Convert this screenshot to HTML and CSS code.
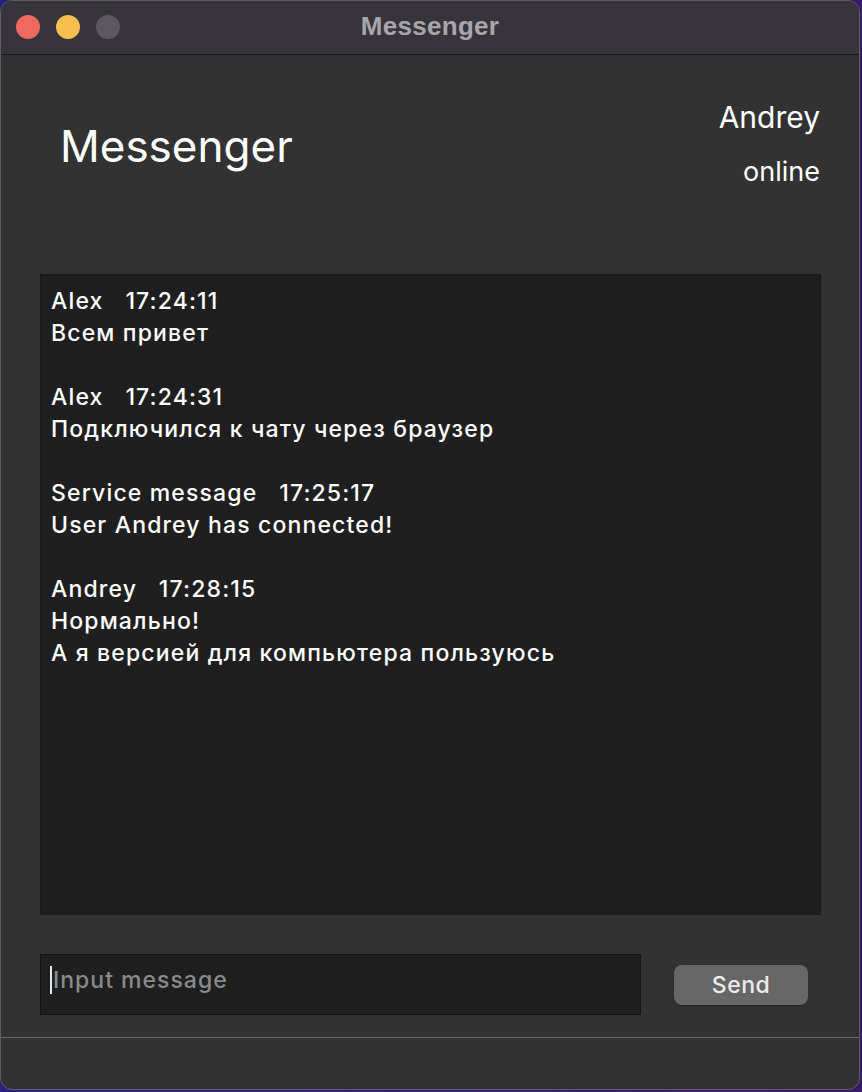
FILE: index.html
```html
<!DOCTYPE html>
<html>
<head>
<meta charset="utf-8">
<link rel="stylesheet" href="styles.css">
</head>
<body>
<div class="window">
  <div class="titlebar">
    <div class="lights">
      <span class="light red"></span>
      <span class="light yellow"></span>
      <span class="light gray"></span>
    </div>
    <div class="title">Messenger</div>
  </div>
  <div class="content">
    <div class="header">
      <div class="app-name">Messenger</div>
      <div class="user">
        <div class="user-name">Andrey</div>
        <div class="user-status">online</div>
      </div>
    </div>
    <div class="chat">
      <div class="line">Alex&nbsp;&nbsp;&nbsp;17:24:11</div>
      <div class="line">Всем привет</div>
      <div class="line">&nbsp;</div>
      <div class="line">Alex&nbsp;&nbsp;&nbsp;17:24:31</div>
      <div class="line">Подключился к чату через браузер</div>
      <div class="line">&nbsp;</div>
      <div class="line">Service message&nbsp;&nbsp;&nbsp;17:25:17</div>
      <div class="line">User Andrey has connected!</div>
      <div class="line">&nbsp;</div>
      <div class="line">Andrey&nbsp;&nbsp;&nbsp;17:28:15</div>
      <div class="line">Нормально!</div>
      <div class="line">А я версией для компьютера пользуюсь</div>
    </div>
    <div class="composer">
      <div class="input"><span class="caret"></span><span class="placeholder">Input message</span></div>
      <div class="send">Send</div>
    </div>
  </div>
  <div class="footer"></div>
</div>
</body>
</html>
```
FILE: styles.css
```css
* { box-sizing: border-box; }
html, body { margin: 0; padding: 0; }
body {
  width: 862px;
  height: 1092px;
  background: linear-gradient(90deg, #2a1f86 0%, #3a1b6a 100%);
  font-family: Inter, "Liberation Sans", Arial, sans-serif;
  overflow: hidden;
}
.window {
  width: 860px;
  height: 1090px;
  border-radius: 12px;
  border: 1px solid #5e5e62;
  background: #323232;
  overflow: hidden;
  display: flex;
  flex-direction: column;
}
.titlebar {
  height: 54px;
  flex: none;
  background: #37353b;
  border-bottom: 1px solid #19181b;
  display: flex;
  align-items: center;
  position: relative;
}
.lights {
  display: flex;
  gap: 16px;
  padding-left: 15px;
  margin-top: -1px;
}
.light {
  width: 24px;
  height: 24px;
  border-radius: 50%;
  display: block;
}
.red { background: #ee695e; }
.yellow { background: #f5be4f; }
.gray { background: #5b595f; }
.title {
  position: absolute;
  left: 0;
  right: 0;
  top: 10px;
  text-align: center;
  color: #a8a6ac;
  font-family: "Liberation Sans", Arial, sans-serif;
  font-weight: bold;
  font-size: 26px;
  letter-spacing: 0.3px;
}
.content {
  flex: 1;
  display: flex;
  flex-direction: column;
  padding: 0 38px 0 39px;
}
.header {
  height: 219px;
  display: flex;
  justify-content: space-between;
  align-items: flex-start;
}
.app-name {
  color: #ffffff;
  font-size: 44px;
  margin-top: 64px;
  margin-left: 20px;
}
.user {
  display: flex;
  flex-direction: column;
  align-items: flex-end;
  margin-top: 42px;
  margin-right: 1px;
  color: #ffffff;
}
.user-name { font-size: 30px; line-height: 40px; }
.user-status { font-size: 27px; line-height: 40px; margin-top: 15px; }
.chat {
  height: 641px;
  background: #1f1f1f;
  border: 1px solid #191919;
  padding: 10px 10px;
  color: #ffffff;
  font-size: 23px;
  font-weight: 500;
  letter-spacing: 1.15px;
}
.line { line-height: 32px; height: 32px; white-space: nowrap; }
.composer {
  display: flex;
  align-items: center;
  margin-top: 39px;
  height: 61px;
}
.input {
  width: 601px;
  height: 61px;
  background: #1f1f1f;
  border: 1px solid #141414;
  display: flex;
  align-items: center;
  padding-left: 9px;
  padding-bottom: 10px;
}
.caret {
  width: 2px;
  height: 28px;
  background: #e6e6e6;
  display: block;
}
.placeholder {
  color: #8a8a8a;
  font-size: 23px;
  font-weight: 500;
  letter-spacing: 1px;
  margin-left: 1px;
}
.send {
  margin-left: 33px;
  width: 134px;
  height: 40px;
  border-radius: 8px;
  background: #676767;
  color: #ececec;
  font-size: 23px;
  font-weight: 500;
  letter-spacing: 0.5px;
  display: flex;
  align-items: center;
  justify-content: center;
  box-shadow: 0 1px 1px rgba(0,0,0,0.3);
}
.footer {
  height: 52px;
  flex: none;
  border-top: 1px solid #6a6a6a;
  margin-top: 22px;
}
```
